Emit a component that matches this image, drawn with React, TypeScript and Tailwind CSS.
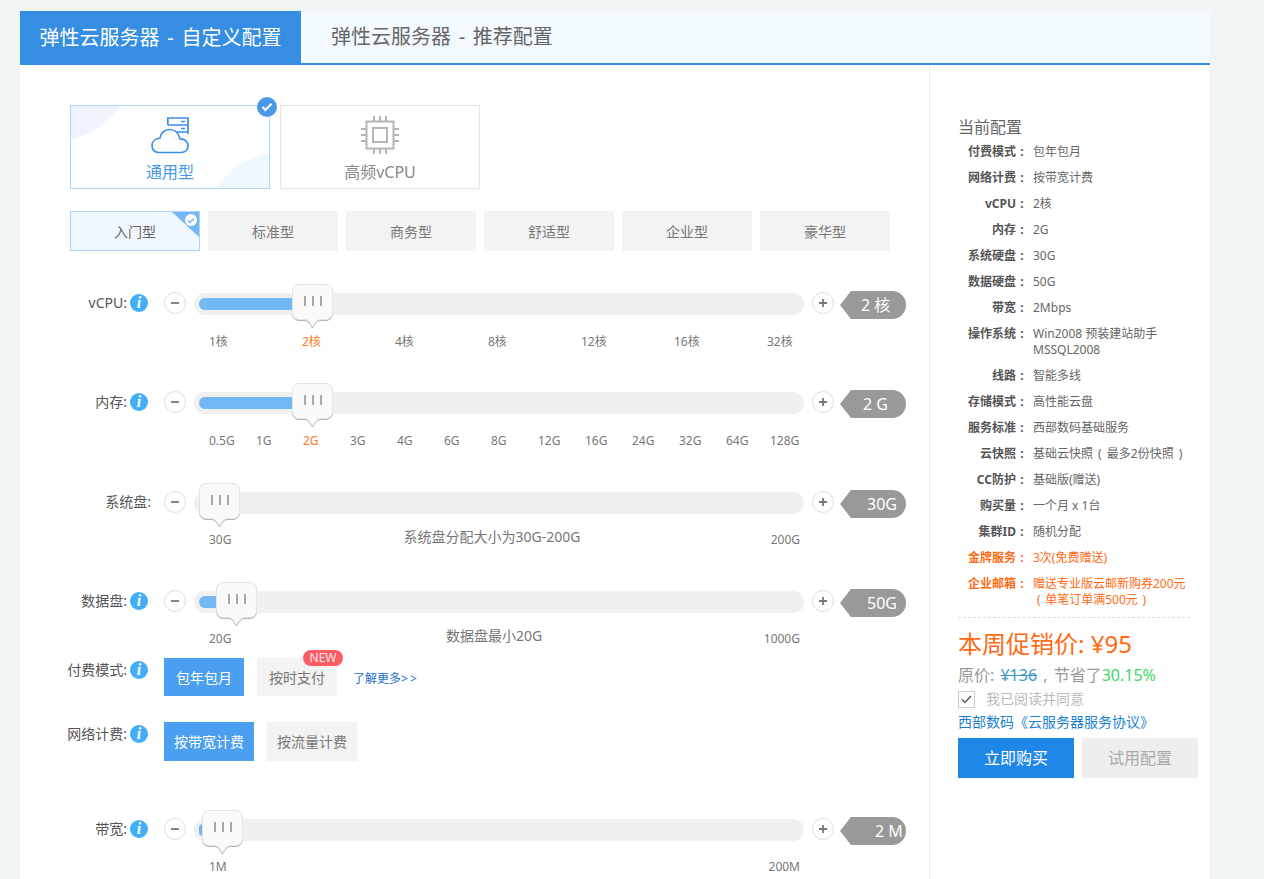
import React from "react";

const subTypes = ["入门型", "标准型", "商务型", "舒适型", "企业型", "豪华型"];

const config: [string, React.ReactNode, boolean?][] = [
  ["付费模式", "包年包月"],
  ["网络计费", "按带宽计费"],
  ["vCPU", "2核"],
  ["内存", "2G"],
  ["系统硬盘", "30G"],
  ["数据硬盘", "50G"],
  ["带宽", "2Mbps"],
  ["操作系统", <>Win2008 预装建站助手<br />MSSQL2008</>],
  ["线路", "智能多线"],
  ["存储模式", "高性能云盘"],
  ["服务标准", "西部数码基础服务"],
  ["云快照", <span className="[word-spacing:2px]">基础云快照 ( 最多2份快照 )</span>],
  ["CC防护", "基础版(赠送)"],
  ["购买量", "一个月 x 1台"],
  ["集群ID", "随机分配"],
  ["金牌服务", "3次(免费赠送)", true],
  ["企业邮箱", <>赠送专业版云邮新购券200元<br /><span className="pl-[4px] [word-spacing:1.5px]">( 单笔订单满500元 )</span></>, true],
];

function InfoIcon() {
  return (
    <span className="flex h-[18px] w-[18px] shrink-0 items-center justify-center rounded-full bg-[#41aef7] font-['Liberation_Serif',serif] text-[16px] font-bold italic leading-none text-white">
      i
    </span>
  );
}

function RoundButton({ plus }: { plus?: boolean }) {
  return (
    <div className="mt-px flex h-[22px] w-[22px] shrink-0 items-center justify-center rounded-full border border-[#dddddd] bg-white">
      <svg width="10" height="10" viewBox="0 0 10 10">
        <path d={plus ? "M1 5H9M5 1V9" : "M1 5H9"} stroke="#777777" strokeWidth="1.8" />
      </svg>
    </div>
  );
}

function Thumb({ left }: { left: number }) {
  return (
    <div className="absolute top-[-9px] z-10 h-[36px] w-[41px]" style={{ left }}>
      <svg
        width="41"
        height="45"
        viewBox="0 0 41 45"
        className="absolute left-0 top-0 drop-shadow-[0_1px_0_#b5b5b5]"
      >
        <path
          d="M7 .5H34A6.5 6.5 0 0 1 40.5 7V29A6.5 6.5 0 0 1 34 35.5H29C25.5 35.5 23.5 38 20.5 43C17.5 38 15.5 35.5 12 35.5H7A6.5 6.5 0 0 1 .5 29V7A6.5 6.5 0 0 1 7 .5Z"
          fill="#fafafa"
          stroke="#e4e4e4"
        />
      </svg>
      <div className="relative flex h-full w-full items-start justify-center gap-[6px] pt-[12px]">
        <span className="h-[10px] w-[2px] bg-[#a8a8a8]" />
        <span className="h-[10px] w-[2px] bg-[#a8a8a8]" />
        <span className="h-[10px] w-[2px] bg-[#a8a8a8]" />
      </div>
    </div>
  );
}

function SliderRow({
  label,
  value,
  valuePad,
  thumb,
  fill,
  noInfo,
  className,
  marksClass = "mt-[14px]",
  children,
}: {
  label: string;
  value: string;
  valuePad: number;
  thumb: number;
  fill: number;
  noInfo?: boolean;
  className?: string;
  marksClass?: string;
  children: React.ReactNode;
}) {
  return (
    <div className={className}>
      <div className="flex h-[28px] items-start">
        <div className="flex w-[104px] shrink-0 items-center pt-[3px]">
          {noInfo ? (
            <span className="w-[91px] text-right text-[14px] leading-[18px] text-[#555555]">{label}:</span>
          ) : (
            <>
              <span className="w-[67px] text-right text-[14px] leading-[18px] text-[#555555]">{label}:</span>
              <span className="ml-[3px]">
                <InfoIcon />
              </span>
            </>
          )}
        </div>
        <RoundButton />
        <div className="relative ml-[8px] mt-[2px] h-[22px] w-[610px] rounded-full bg-[#f0f0f0]">
          <div className="absolute left-[5px] top-[5px] h-[12px] rounded-full bg-[#72b8f5]" style={{ width: fill }} />
          <Thumb left={thumb} />
        </div>
        <div className="ml-[8px]">
          <RoundButton plus />
        </div>
        <div className="ml-[6px] flex h-[28px] items-center">
          <span className="h-0 w-0 border-y-[14px] border-r-[11px] border-y-transparent border-r-[#999999]" />
          <span
            className="flex h-[28px] w-[55px] items-center rounded-r-full bg-[#999999] text-[16px] leading-none text-white"
            style={{ paddingLeft: valuePad }}
          >
            {value}
          </span>
        </div>
      </div>
      <div className={"ml-[149px] flex h-[16px] w-[591px] text-[12px] leading-[16px] text-[#777777] " + marksClass}>
        {children}
      </div>
    </div>
  );
}

function Marks({ items, steps, active }: { items: string[]; steps: number[]; active: string }) {
  return (
    <>
      {items.map((m, i) => (
        <span
          key={m}
          className={m === active ? "shrink-0 text-[#ff7a1a]" : "shrink-0"}
          style={{ width: steps[i] }}
        >
          {m}
        </span>
      ))}
    </>
  );
}

function RangeMarks({ from, to, note, noteClass }: { from: string; to: string; note?: string; noteClass?: string }) {
  return (
    <div className="flex w-full justify-between">
      <span>{from}</span>
      {note && <span className={"mt-[-3px] text-[14px] text-[#777777] " + noteClass}>{note}</span>}
      <span>{to}</span>
    </div>
  );
}

function OptionRow({ label, className, children }: { label: string; className?: string; children: React.ReactNode }) {
  return (
    <div className={"flex items-start " + (className || "")}>
      <div className="flex w-[104px] shrink-0 items-center pt-[3px]">
        <span className="w-[67px] whitespace-nowrap text-right text-[14px] leading-[18px] text-[#555555]">{label}:</span>
        <span className="ml-[3px]">
          <InfoIcon />
        </span>
      </div>
      {children}
    </div>
  );
}

export default function App() {
  const memItems = ["0.5G", "1G", "2G", "3G", "4G", "6G", "8G", "12G", "16G", "24G", "32G", "64G", "128G"];
  const memSteps = memItems.map((_, i) => (i === 11 ? 44 : 47));

  return (
    <div className="h-screen overflow-hidden bg-[#f0f4f5] pl-[20px] pt-[11px] font-['Noto_Sans','Noto_Sans_CJK_SC',sans-serif]">
      <div className="w-[1190px] bg-white">
        {/* tabs */}
        <div className="flex h-[54px] border-b-2 border-[#358ee1] bg-[#f2f9ff]">
          <div className="flex h-[54px] w-[281px] items-center justify-center bg-[#358ee1] text-[20px] text-white [word-spacing:2.5px]">
            弹性云服务器 - 自定义配置
          </div>
          <div className="flex h-[52px] items-center pl-[30px] text-[20px] text-[#666666] [word-spacing:2.5px]">
            弹性云服务器 - 推荐配置
          </div>
        </div>

        <div className="flex">
          <div className="w-[909px] shrink-0 pl-[40px] pt-[40px]">
            {/* instance type */}
            <div className="ml-[10px] flex gap-[10px]">
              <div className="relative h-[84px] w-[200px] border border-[#acd4fb] bg-white">
                <div className="absolute inset-0 overflow-hidden">
                  <div className="absolute left-[-105px] top-[-134px] h-[170px] w-[170px] rounded-full bg-[#eff4fe]" />
                  <div className="absolute left-[130px] top-[45px] h-[170px] w-[170px] rounded-full bg-[#eff8fe]" />
                </div>
                <div className="relative flex h-full flex-col items-center pt-[11px]">
                  <svg width="40" height="37" viewBox="0 0 40 37" fill="none" stroke="#3a8ee6" strokeWidth="1.7">
                    <path d="M17.8 8V1H38V17M17.8 8H38M27 15H38M31 4.5H35M31 11.5H35" />
                    <path d="M9 35.5H31C35.5 35.5 38 32.5 38 28.7C38 24.8 34.5 21.5 30 21.8C28.8 16 24.5 12.5 19.5 12.5C14.5 12.5 10.5 16 10 21C5 21.5 2 24.8 2 28.7C2 32.5 5 35.5 9 35.5Z" />
                  </svg>
                  <span className="mt-[7px] text-[16px] leading-[22px] text-[#4a98e6]">通用型</span>
                </div>
                <div className="absolute right-[-8px] top-[-9px] flex h-[20px] w-[20px] items-center justify-center rounded-full bg-[#4a98e6]">
                  <svg width="12" height="10" viewBox="0 0 12 10" fill="none">
                    <path d="M1.5 5L4.5 8L10.5 1.8" stroke="white" strokeWidth="2.2" />
                  </svg>
                </div>
              </div>
              <div className="flex h-[84px] w-[200px] flex-col items-center border border-[#e4e4e4] pt-[10px]">
                <svg width="38" height="38" viewBox="0 0 38 38" fill="none" stroke="#b5b5b5" strokeWidth="2">
                  <rect x="5.5" y="5.5" width="27" height="27" />
                  <rect x="12" y="12" width="14" height="14" />
                  <path d="M13 0V5M19 0V5M25 0V5M13 33V38M19 33V38M25 33V38M0 13H5M0 19H5M0 25H5M33 13H38M33 19H38M33 25H38" />
                </svg>
                <span className="mt-[7px] text-[16px] leading-[22px] text-[#888888]">高频vCPU</span>
              </div>
            </div>

            {/* sub types */}
            <div className="ml-[10px] mt-[22px] flex gap-[8px]">
              {subTypes.map((t, i) =>
                i === 0 ? (
                  <div
                    key={t}
                    className="relative flex h-[40px] w-[130px] items-center justify-center border border-[#acd4fb] bg-[#f0f8ff] text-[14px] text-[#666666]"
                  >
                    {t}
                    <span className="absolute right-0 top-0 h-0 w-0 border-l-[27px] border-t-[25px] border-l-transparent border-t-[#73b8f5]" />
                    <span className="absolute right-[2px] top-[2px] flex h-[12px] w-[12px] items-center justify-center rounded-full bg-white">
                      <svg width="8" height="7" viewBox="0 0 8 7" fill="none">
                        <path d="M1 3.5L3 5.5L7 1.5" stroke="#73b8f5" strokeWidth="1.4" />
                      </svg>
                    </span>
                  </div>
                ) : (
                  <div key={t} className="flex h-[40px] w-[130px] items-center justify-center bg-[#f3f3f3] text-[14px] text-[#777777]">
                    {t}
                  </div>
                ),
              )}
            </div>

            <SliderRow label="vCPU" value="2 核" valuePad={10} thumb={98} fill={101} className="mt-[40px]" marksClass="mt-[15px]">
              <Marks
                items={["1核", "2核", "4核", "8核", "12核", "16核", "32核"]}
                steps={[93, 93, 93, 93, 93, 93, 30]}
                active="2核"
              />
            </SliderRow>
            <SliderRow label="内存" value="2 G" valuePad={12} thumb={98} fill={101} className="mt-[40px]" marksClass="mt-[15px]">
              <Marks items={memItems} steps={memSteps} active="2G" />
            </SliderRow>
            <SliderRow label="系统盘" value="30G" valuePad={16} thumb={5} fill={10} noInfo className="mt-[41px]">
              <RangeMarks from="30G" to="200G" note="系统盘分配大小为30G-200G" noteClass="mr-[18px]" />
            </SliderRow>
            <SliderRow label="数据盘" value="50G" valuePad={16} thumb={22} fill={22} className="mt-[41px]">
              <RangeMarks from="20G" to="1000G" note="数据盘最小20G" noteClass="mr-[7px]" />
            </SliderRow>

            <OptionRow label="付费模式" className="mt-[11px]">
              <div className="flex h-[38px] w-[80px] items-center justify-center bg-[#4a9ff0] text-[14px] text-white">包年包月</div>
              <div className="relative ml-[13px] flex h-[38px] w-[80px] items-center justify-center bg-[#f3f3f3] text-[14px] text-[#777777]">
                按时支付
                <span className="absolute left-[46px] top-[-8px] flex h-[16px] w-[40px] items-center justify-center rounded-full bg-[#fb5c63] text-[12px] leading-none text-[#ffe6e6]">
                  NEW
                </span>
              </div>
              <span className="ml-[16px] mt-[13px] whitespace-nowrap text-[12px] leading-[16px] text-[#1a6fc9]">
                了解更多<span className="tracking-[2px]">&gt;&gt;</span>
              </span>
            </OptionRow>

            <OptionRow label="网络计费" className="mt-[26px]">
              <div className="flex h-[39px] w-[90px] items-center justify-center bg-[#4a9ff0] text-[14px] text-white">按带宽计费</div>
              <div className="ml-[13px] flex h-[39px] w-[90px] items-center justify-center bg-[#f3f3f3] text-[14px] text-[#777777]">按流量计费</div>
            </OptionRow>

            <SliderRow label="带宽" value="2 M" valuePad={24} thumb={8} fill={8} className="mt-[56px]">
              <RangeMarks from="1M" to="200M" />
            </SliderRow>
          </div>

          {/* summary */}
          <div className="h-[900px] flex-1 border-l border-[#eeeeee] pl-[28px] pt-[52px]">
            <div className="text-[16px] leading-[20px] text-[#666666]">当前配置</div>
            <div className="mt-[7px] flex flex-col gap-[10px]">
              {config.map(([k, v, hot]) => (
                <div key={k} className={"flex text-[12px] leading-[16px] " + (hot ? "text-[#ff6a13]" : "text-[#666666]")}>
                  <span className={"w-[70px] shrink-0 text-right font-bold " + (hot ? "text-[#ff6a13]" : "text-[#555555]")}>
                    {k}
                    <span className="inline-block w-[12px] text-center">:</span>
                  </span>
                  <span className="ml-[5px] whitespace-nowrap">{v}</span>
                </div>
              ))}
            </div>
            <div className="mt-[9px] w-[232px] border-t border-dashed border-[#dddddd]" />
            <div className="mt-[10px] text-[24px] leading-[32px] text-[#ff6a13]">本周促销价: ¥95</div>
            <div className="mt-[3px] whitespace-nowrap text-[16px] leading-[24px] text-[#999999] [word-spacing:2px]">
              原价: <span className="text-[#3d9bc4] line-through">¥136</span> , 节省了<span className="text-[#44d66a]">30.15%</span>
            </div>
            <div className="mt-[2px] flex items-center">
              <span className="flex h-[17px] w-[17px] items-center justify-center border border-[#cccccc]">
                <svg width="11" height="9" viewBox="0 0 11 9" fill="none">
                  <path d="M1 4.5L4 7.5L10 1" stroke="#444444" strokeWidth="1.2" />
                </svg>
              </span>
              <span className="ml-[11px] text-[14px] leading-[20px] text-[#bbbbbb]">我已阅读并同意</span>
            </div>
            <div className="mt-[3px] whitespace-nowrap text-[14px] leading-[20px] text-[#1a7fd0]">西部数码《云服务器服务协议》</div>
            <div className="mt-[6px] flex gap-[8px]">
              <div className="flex h-[40px] w-[116px] items-center justify-center bg-[#1f87e8] text-[16px] text-white">立即购买</div>
              <div className="flex h-[40px] w-[116px] items-center justify-center bg-[#eeeeee] text-[16px] text-[#aaaaaa]">试用配置</div>
            </div>
          </div>
        </div>
      </div>
    </div>
  );
}
